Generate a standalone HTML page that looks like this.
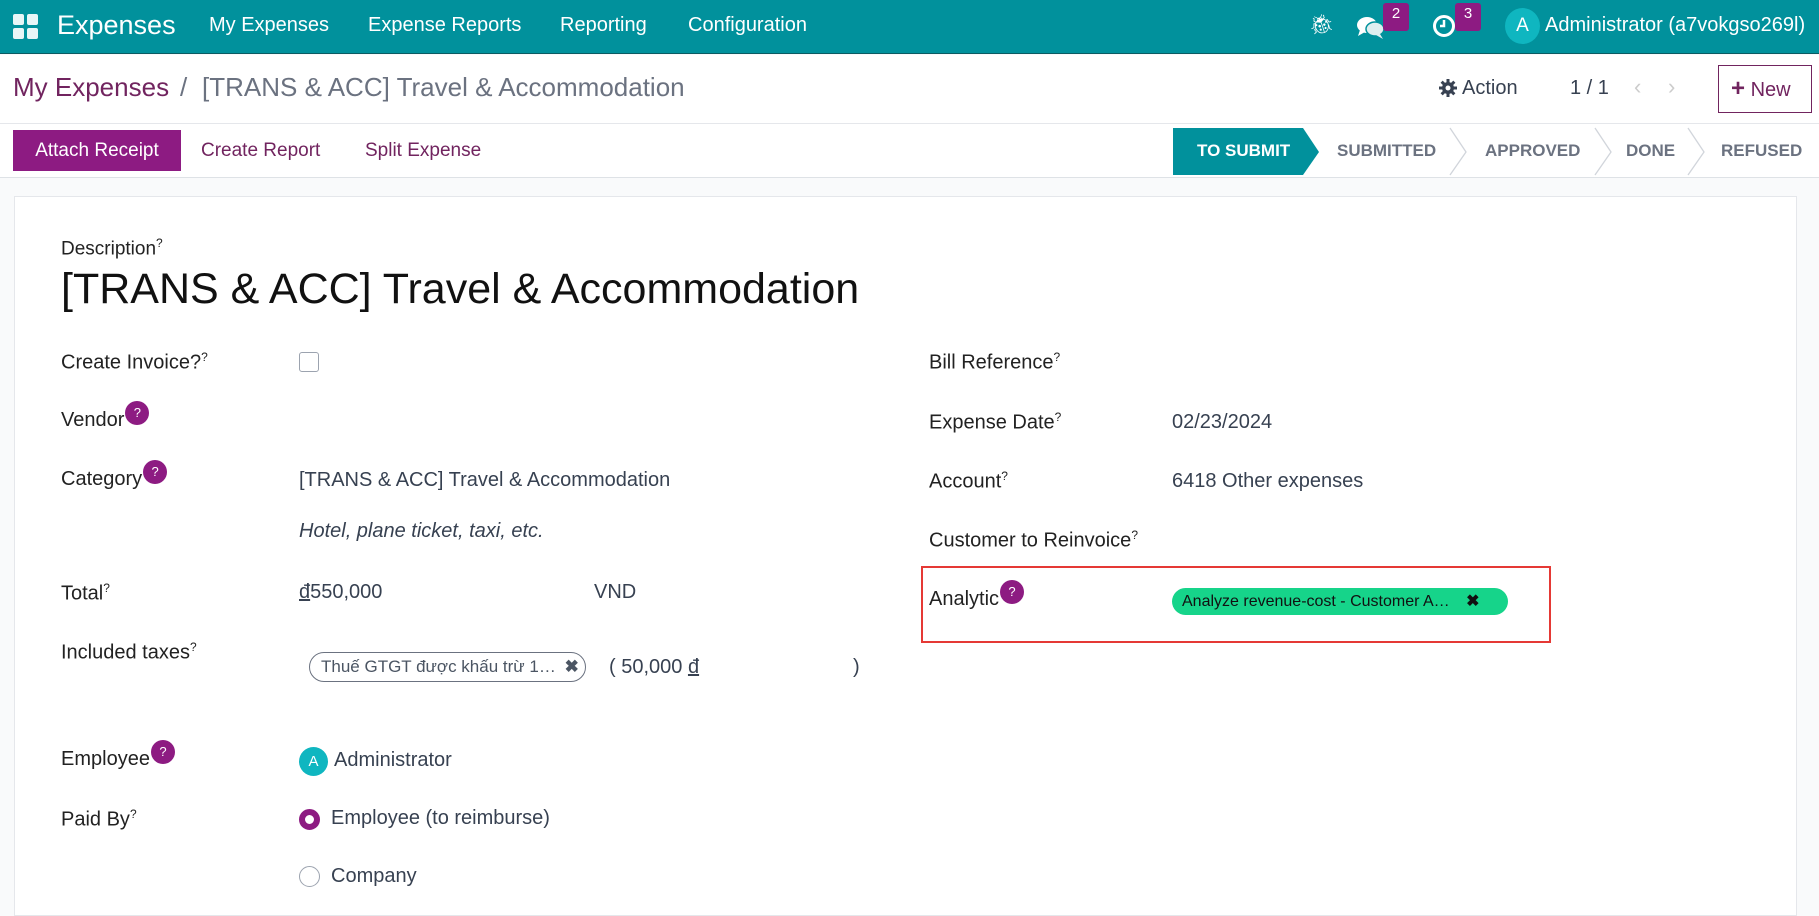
<!DOCTYPE html>
<html><head><meta charset="utf-8"><style>
*{box-sizing:border-box;margin:0;padding:0}
body{width:1819px;height:899px;overflow:hidden;font-family:"Liberation Sans","Noto Sans CJK SC",sans-serif;background:#f9fafb;color:#374151;position:relative}
.a{position:absolute;white-space:nowrap}
#nav{position:absolute;left:0;top:0;width:1819px;height:54px;background:#01919c;border-bottom:1px solid #0b5b62;color:#fff}
#nav .a{top:14px;font-size:20px;color:#fff}
#ctl{position:absolute;left:0;top:55px;width:1819px;height:123px;background:#fff;border-bottom:1px solid #dee2e6}
.lab{font-size:20px;color:#222}
.val{font-size:20px;color:#374151}
sup{font-size:12px}
.q{position:relative;top:-8px;display:inline-block;width:24px;height:24px;border-radius:50%;background:#8d1b82;color:#fff;font-size:13px;text-align:center;line-height:24px;vertical-align:top;margin-left:1px}
.badge{position:absolute;top:3px;width:26px;height:28px;background:#8d1b82;border-radius:3px;color:#fff;font-size:15px;text-align:center;line-height:22px}
.st{top:141px;font-size:17px;font-weight:bold;color:#6b7280}
</style></head><body>
<div id="nav">
<svg class="a" style="left:13px;top:14px" width="26" height="26" viewBox="0 0 26 26"><rect x="0" y="0" width="11" height="11" rx="2" fill="#e8f6f7"/><rect x="14" y="0" width="11" height="11" rx="2" fill="#e8f6f7"/><rect x="0" y="14" width="11" height="11" rx="2" fill="#e8f6f7"/><rect x="14" y="14" width="11" height="11" rx="2" fill="#e8f6f7"/></svg>
<div class="a" style="left:57px;top:10px!important;font-size:27px">Expenses</div>
<div class="a" style="left:209px">My Expenses</div>
<div class="a" style="left:368px">Expense Reports</div>
<div class="a" style="left:560px">Reporting</div>
<div class="a" style="left:688px">Configuration</div>
<div class="a" style="left:1309px;top:12px;font-size:20px">🐞︎</div>
<svg class="a" style="left:1356px;top:15px" width="30" height="26" viewBox="0 0 30 26"><ellipse cx="11" cy="10" rx="10" ry="8" fill="#fff"/><path d="M4 15 L2 21 L9 17Z" fill="#fff"/><ellipse cx="19" cy="14" rx="9" ry="7" fill="#dfeff0" stroke="#01919c" stroke-width="1.5"/><path d="M24 19 L27 24 L20 20Z" fill="#dfeff0"/></svg>
<div class="badge" style="left:1383px">2</div>
<svg class="a" style="left:1432px;top:14px" width="24" height="24" viewBox="0 0 24 24"><circle cx="12" cy="12" r="9.5" fill="none" stroke="#fff" stroke-width="3"/><path d="M12 6V12H8" stroke="#fff" stroke-width="2.5" fill="none"/></svg>
<div class="badge" style="left:1455px">3</div>
<div class="a" style="left:1505px;top:8px;width:35px;height:36px;border-radius:50%;background:#0fb6c0;text-align:center;line-height:36px;font-size:19px">A</div>
<div class="a" style="left:1545px">Administrator (a7vokgso269l)</div>
</div>
<div id="ctl">
<div class="a" style="left:13px;top:17px;font-size:26px;color:#71245f">My Expenses</div>
<div class="a" style="left:180px;top:17px;font-size:26px;color:#6b7280">/</div>
<div class="a" style="left:202px;top:17px;font-size:26px;color:#6b7280">[TRANS &amp; ACC] Travel &amp; Accommodation</div>
<svg class="a" style="left:1439px;top:24px" width="18" height="18" viewBox="0 0 18 18"><g fill="#374151"><circle cx="9" cy="9" r="6"/><rect x="7.5" y="0" width="3" height="18"/><rect x="0" y="7.5" width="18" height="3"/><rect x="7.5" y="0" width="3" height="18" transform="rotate(45 9 9)"/><rect x="7.5" y="0" width="3" height="18" transform="rotate(-45 9 9)"/></g><circle cx="9" cy="9" r="2.5" fill="#fff"/></svg>
<div class="a" style="left:1462px;top:22px;font-size:20px;color:#374151">Action</div>
<div class="a" style="left:1570px;top:22px;font-size:20px;color:#374151">1 / 1</div>
<div class="a" style="left:1634px;top:19px;font-size:22px;color:#ccc">&#x2039;</div>
<div class="a" style="left:1668px;top:19px;font-size:22px;color:#ccc">&#x203A;</div>
<div class="a" style="left:1718px;top:10px;width:94px;height:48px;border:1px solid #71245f;color:#71245f;font-size:20px;line-height:46px;padding-left:12px"><b style="font-size:24px">+</b> New</div>
<div class="a" style="left:0;top:68px;width:1819px;border-top:1px solid #e5e7eb"></div>
<div class="a" style="left:13px;top:75px;width:168px;height:41px;background:#8d1b82;color:#fff;font-size:19px;line-height:41px;text-align:center">Attach Receipt</div>
<div class="a" style="left:201px;top:85px;font-size:19px;color:#71245f">Create Report</div>
<div class="a" style="left:365px;top:85px;font-size:19px;color:#71245f">Split Expense</div>
</div>
<svg class="a" style="left:1173px;top:124px" width="646" height="53" viewBox="0 0 646 53"><path d="M0 4H130L146 28L130 51H0Z" fill="#01919c"/><g stroke="#d1d5db" fill="none" stroke-width="1.3"><path d="M277 4L293 28L277 51"/><path d="M422 4L438 28L422 51"/><path d="M515 4L531 28L515 51"/></g></svg>
<div class="a st" style="left:1197px;color:#fff">TO SUBMIT</div>
<div class="a st" style="left:1337px">SUBMITTED</div>
<div class="a st" style="left:1485px">APPROVED</div>
<div class="a st" style="left:1626px">DONE</div>
<div class="a st" style="left:1721px">REFUSED</div>
<div class="a" style="left:14px;top:196px;width:1783px;height:720px;background:#fff;border:1px solid #e5e7eb"></div>
<div class="a lab" style="left:61px;top:236px;font-size:19px">Description<sup>?</sup></div>
<div class="a" style="left:61px;top:265px;font-size:43px;color:#111">[TRANS &amp; ACC] Travel &amp; Accommodation</div>
<div class="a lab" style="left:61px;top:350px">Create Invoice?<sup>?</sup></div>
<div class="a" style="left:299px;top:352px;width:20px;height:20px;border:1px solid #9ca3af;border-radius:3px"></div>
<div class="a lab" style="left:61px;top:409px">Vendor<span class="q">?</span></div>
<div class="a lab" style="left:61px;top:468px">Category<span class="q">?</span></div>
<div class="a val" style="left:299px;top:469px">[TRANS &amp; ACC] Travel &amp; Accommodation</div>
<div class="a val" style="left:299px;top:520px;font-style:italic">Hotel, plane ticket, taxi, etc.</div>
<div class="a lab" style="left:61px;top:581px">Total<sup>?</sup></div>
<div class="a val" style="left:299px;top:581px"><u>đ</u>550,000</div>
<div class="a val" style="left:594px;top:581px">VND</div>
<div class="a lab" style="left:61px;top:640px">Included taxes<sup>?</sup></div>
<div class="a" style="left:309px;top:652px;width:277px;height:30px;border:1px solid #6b7280;border-radius:15px;font-size:17px;line-height:28px;padding-left:11px;color:#4b5563">Thuế GTGT được khấu trừ 1… <b style="margin-left:4px">✖</b></div>
<div class="a val" style="left:609px;top:656px">( 50,000 <u>đ</u></div>
<div class="a val" style="left:853px;top:656px">)</div>
<div class="a lab" style="left:61px;top:748px">Employee<span class="q">?</span></div>
<div class="a" style="left:299px;top:747px;width:29px;height:29px;border-radius:50%;background:#0fb6c0;color:#fff;text-align:center;line-height:29px;font-size:15px">A</div>
<div class="a val" style="left:334px;top:749px">Administrator</div>
<div class="a lab" style="left:61px;top:807px">Paid By<sup>?</sup></div>
<div class="a" style="left:299px;top:809px;width:21px;height:21px;border-radius:50%;border:6px solid #8d1b82"></div>
<div class="a val" style="left:331px;top:807px">Employee (to reimburse)</div>
<div class="a" style="left:299px;top:866px;width:21px;height:21px;border-radius:50%;border:1px solid #9ca3af"></div>
<div class="a val" style="left:331px;top:865px">Company</div>
<div class="a lab" style="left:929px;top:350px">Bill Reference<sup>?</sup></div>
<div class="a lab" style="left:929px;top:410px">Expense Date<sup>?</sup></div>
<div class="a val" style="left:1172px;top:411px">02/23/2024</div>
<div class="a lab" style="left:929px;top:469px">Account<sup>?</sup></div>
<div class="a val" style="left:1172px;top:470px">6418 Other expenses</div>
<div class="a lab" style="left:929px;top:528px">Customer to Reinvoice<sup>?</sup></div>
<div class="a" style="left:921px;top:566px;width:630px;height:77px;border:2px solid #e53935"></div>
<div class="a lab" style="left:929px;top:588px">Analytic<span class="q">?</span></div>
<div class="a" style="left:1172px;top:588px;width:336px;height:27px;border-radius:14px;background:#16d48a;color:#111;font-size:16px;line-height:27px;padding-left:10px">Analyze revenue-cost - Customer A… <b style="margin-left:12px">✖</b></div>
</body></html>
